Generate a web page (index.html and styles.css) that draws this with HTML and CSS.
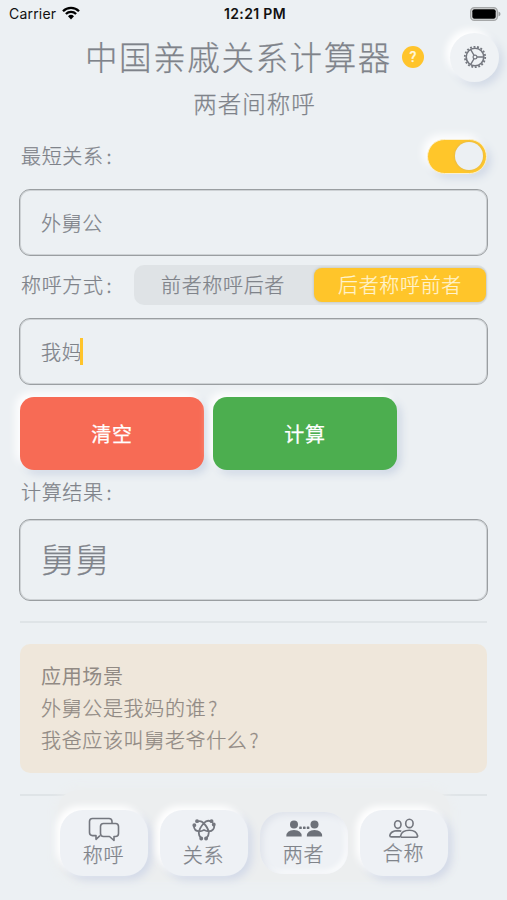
FILE: index.html
```
<!DOCTYPE html>
<html lang="zh-CN">
<head>
<meta charset="utf-8">
<title>中国亲戚关系计算器</title>
<link rel="stylesheet" href="styles.css">
</head>
<body>
<div class="status">
  <div class="carrier"><span>Carrier</span>
    <svg class="wifi" viewBox="0 0 18 14" width="18" height="14"><path d="M1 5.2a11.3 11.3 0 0 1 16 0M3.9 8a7.2 7.2 0 0 1 10.200 0" fill="none" stroke="#000" stroke-width="2.300"/><path d="M6 10.300a4.300 4.300 0 0 1 6 0L9 13.500z"/></svg>
  </div>
  <div class="clock">12:21 PM</div>
  <div class="power"><svg viewBox="0 0 31 14" width="31" height="14"><rect x=".7" y=".7" width="26.600" height="12.600" rx="3.600" fill="#e6e8e9" stroke="#a5a7a8" stroke-width="1.400"/><rect x="2.300" y="2.300" width="23.400" height="9.400" rx="2" fill="#000"/><path d="M28.500 4.500q2 .8 2 2.500t-2 2.500z" fill="#9b9d9e"/></svg></div>
</div>
<header class="header">
  <h1 class="title">中国亲戚关系计算器</h1>
  <span class="help">?</span>
  <button class="settings" aria-label="设置">
    <svg viewBox="-12 -12 24 24" width="24" height="24" fill="none" stroke="#74777f"><circle r="8.800" stroke-width="1.600"/><circle r="10.200" stroke-width="1.800" stroke-dasharray="1.900 1.661"/><circle r="1.900" stroke-width="1.200"/><path d="M2 0H8.800M-1 -1.730L-4.400 -7.600M-1 1.730L-4.400 7.600" stroke-width="1.400"/></svg>
  </button>
</header>
<h2 class="subtitle">两者间称呼</h2>
<main class="form">
  <div class="row row-toggle"><span class="label">最短关系<i class="colon">:</i></span><span class="switch"><i class="knob"></i></span></div>
  <div class="field">外舅公</div>
  <div class="row row-mode"><span class="label">称呼方式<i class="colon">:</i></span>
    <div class="segmented"><span class="segment">前者称呼后者</span><span class="segment active">后者称呼前者</span></div>
  </div>
  <div class="field">我妈<i class="caret"></i></div>
  <div class="actions"><button class="action clear">清空</button><button class="action calc">计算</button></div>
  <div class="row row-result"><span class="label">计算结果<i class="colon">:</i></span></div>
  <div class="field result">舅舅</div>
  <hr class="rule">
  <section class="note"><p class="note-title">应用场景</p><p>外舅公是我妈的谁<i class="question">?</i></p><p>我爸应该叫舅老爷什么<i class="question">?</i></p></section>
  <hr class="rule rule-end">
</main>
<nav class="tabs">
  <a class="tab">
    <svg viewBox="0 0 32 26" width="32" height="26" fill="none" stroke="#74777f" stroke-width="1.600" stroke-linejoin="round"><path d="M12 18.600L8 22.300V18.600H4.500Q1.500 18.600 1.500 15.600V4.500Q1.500 1.500 4.500 1.500H21Q24 1.500 24 4.500V6.300"/><path d="M15.500 6.500H27.500Q30.500 6.500 30.500 9.500V16.500Q30.500 19.500 27.500 19.500H26V23.500L21.500 19.500H15.500Q12.500 19.500 12.500 16.500V9.500Q12.500 6.500 15.500 6.500z"/></svg>
    <span>称呼</span></a>
  <a class="tab">
    <svg viewBox="0 0 32 26" width="32" height="26" fill="none" stroke="#74777f" stroke-width="1.800"><path d="M10 4.500Q13 3.500 15.500 6Q20.300 11 20.800 15.500Q20.800 19 18.500 21M23 4.500Q19 2.500 16 6Q11 11.500 10.800 16Q10.800 19 13 21M5.800 8.500Q6 14.300 11.500 14.300Q13.500 14.300 16 13Q18.500 14.300 21 14.300Q26.300 14 26.300 8.500"/><path d="M9 4.200h.1M25.700 7.500h.1M23.500 4.200h.1M13.200 21.500h.1M18 21.500h.1M6.300 8.200h.1" stroke-width="3.800" stroke-linecap="round"/></svg>
    <span>关系</span></a>
  <a class="tab current">
    <svg viewBox="0 0 38 24" width="38" height="24" fill="#6d7179"><circle cx="9" cy="6.500" r="4"/><path d="M1.300 18.500Q1.300 12 9 12T16.700 18.500z"/><circle cx="29.500" cy="6.500" r="4"/><path d="M21.800 18.500Q21.800 12 29.500 12T37.200 18.500z"/><rect x="14.200" y="8.400" width="2.600" height="2.600" rx=".6"/><rect x="18" y="8.400" width="2.600" height="2.600" rx=".6"/><rect x="21.800" y="8.400" width="2.600" height="2.600" rx=".6"/></svg>
    <span>两者</span></a>
  <a class="tab">
    <svg viewBox="0 0 32 24" width="32" height="24" fill="none" stroke="#74777f" stroke-width="1.600"><ellipse cx="9.800" cy="7.500" rx="3.200" ry="3.800"/><ellipse cx="21.400" cy="6.400" rx="3.700" ry="4.200"/><path d="M12 19.900H3.500Q1.800 19.900 1.800 18.500Q2.600 13.800 9.800 13.600Q11.500 13.600 13.300 14.300M14.500 20.300H28Q29.800 20.300 29.600 18.800Q28.300 13.200 21.400 13.200Q13.800 13.200 12.600 18.800Q12.300 20.300 14.500 20.300z"/></svg>
    <span>合称</span></a>
</nav>
</body>
</html>
```
FILE: styles.css
```
* { box-sizing: border-box; }
body {
  margin: 0;
  width: 507px;
  height: 900px;
  overflow: hidden;
  background: #ecf0f3;
  color: #7f838a;
  font: 300 20px/32px "Noto Sans CJK SC", sans-serif;
  letter-spacing: .65px;
  -webkit-text-stroke: .25px currentColor;
}
i { font-style: normal; }
h1, h2, p { margin: 0; font-weight: 300; }
button { border: 0; padding: 0; font: inherit; letter-spacing: inherit; }
svg { display: block; }

.status {
  display: grid;
  grid-template-columns: 1fr auto 1fr;
  align-items: center;
  height: 28px;
  padding: 0 6px 0 9px;
  color: #111;
  font: 400 14px/20px Inter, sans-serif;
  letter-spacing: .2px;
  -webkit-text-stroke: 0;
}
.carrier { display: flex; align-items: center; gap: 6px; }
.wifi { margin-top: -3px; }
.clock { font-weight: 600; letter-spacing: .35px; }
.power { display: flex; justify-content: flex-end; margin-top: -1px; }

.header { display: flex; align-items: center; height: 58px; padding-left: 85px; }
.title { width: 317px; margin-top: -2px; font-size: 32.500px; line-height: 46px; letter-spacing: 1.600px; white-space: nowrap; }
.help {
  width: 22px; height: 22px; border-radius: 50%;
  background: #ffc42b; color: #fff7dc;
  font: 500 14px/22px Roboto, sans-serif; letter-spacing: 0; text-align: center;
}
.settings {
  display: grid; place-items: center;
  width: 49px; height: 49px; margin-left: 26px; border-radius: 50%;
  background: #eff2f5;
  box-shadow: -4px -4px 7px #fff, 4px 4px 8px #d1d9e6;
}
.subtitle { height: 46px; padding-left: 2px; font-size: 23.500px; line-height: 34px; letter-spacing: 1px; text-align: center; }

.form { padding: 0 19px; }
.row { display: flex; align-items: center; }
.label { padding-left: 2px; white-space: nowrap; }
.colon { padding-left: 3px; }
.row-toggle { height: 48px; justify-content: space-between; margin-bottom: 9px; }
.switch {
  display: flex; justify-content: flex-end;
  width: 60px; height: 35px; padding: 2px 3px; margin-right: 1px;
  border: 1px solid #fbf0cf; border-radius: 18px;
  background: #ffc62a;
  box-shadow: -4px -4px 8px #fff, 4px 4px 8px #d1d9e6;
}
.knob { width: 28px; height: 28px; border-radius: 50%; background: #ecf0f3; box-shadow: 0 0 3px #d5b45d; }
.field {
  display: flex; align-items: center;
  height: 67px; padding-left: 21px;
  border: 1px solid #9a9ea1; border-radius: 11px;
  box-shadow: inset 0 0 0 1px #ced2d5;
}
.caret { width: 3px; height: 27px; margin-left: -2px; background: #ffc42b; }
.row-mode { height: 62px; justify-content: space-between; padding-bottom: 4px; }
.segmented {
  display: flex; width: 353px; height: 40px; padding: 3px 1px 3px 2px;
  margin-right: 1px;
  border-radius: 10px; background: #dfe3e6;
}
.segment { flex: 1; display: grid; place-items: center; padding-right: 4px; border-radius: 8px; }
.active { flex: 0 0 172px; padding-right: 0; background: #ffc52a; color: #fff3cd; box-shadow: 0 0 3px #b5b9ac; }
.actions { display: flex; gap: 9px; padding: 12px 1px 0; height: 85px; }
.action {
  width: 184px; height: 73px; border-radius: 14px;
  color: #fff; font-weight: 400;
  box-shadow: -4px -4px 8px #fff, 4px 4px 8px #cdd6e4;
}
.clear { background: #f76b55; }
.calc { background: #4cae4f; }
.row-result { height: 49px; padding-bottom: 5px; }
.result { height: 82px; font-size: 33px; letter-spacing: 1.500px; padding: 0 0 4px 21px; }
.rule { height: 2px; margin: 20px 1px 21px; border: 0; background: #dfe4e7; }
.note {
  height: 129px; margin: 0 1px; padding: 16px 20px 16px 21px;
  border-radius: 10px; background: #efe7db; color: #918a84;
}
.note-title { font-weight: 400; -webkit-text-stroke: 0; }
.question { padding-left: 2px; }
.rule-end { margin: 21px 1px 0; }

.tabs {
  position: relative;
  display: flex; gap: 12px; justify-content: center;
  width: 392px; height: 90px; margin: -6px auto 0; padding-top: 20px;
  border-radius: 20px; background: #eceeef;
  box-shadow: 0 0 12px 2px #eceeef;
}
.tab {
  display: flex; flex-direction: column; align-items: center;
  width: 88px; height: 66px; padding-top: 7px;
  border-radius: 23px; background: #eef1f5;
  box-shadow: -4px -4px 7px #fff, 4px 4px 8px #d2d9e8;
}
.tab span { line-height: 26px; margin-top: -1px; }
.current {
  height: 62px; margin-top: 2px; padding-top: 6px;
  box-shadow: inset 3px 3px 6px #dfe3eb, inset -3px -3px 5px #fafbfc;
}
```
